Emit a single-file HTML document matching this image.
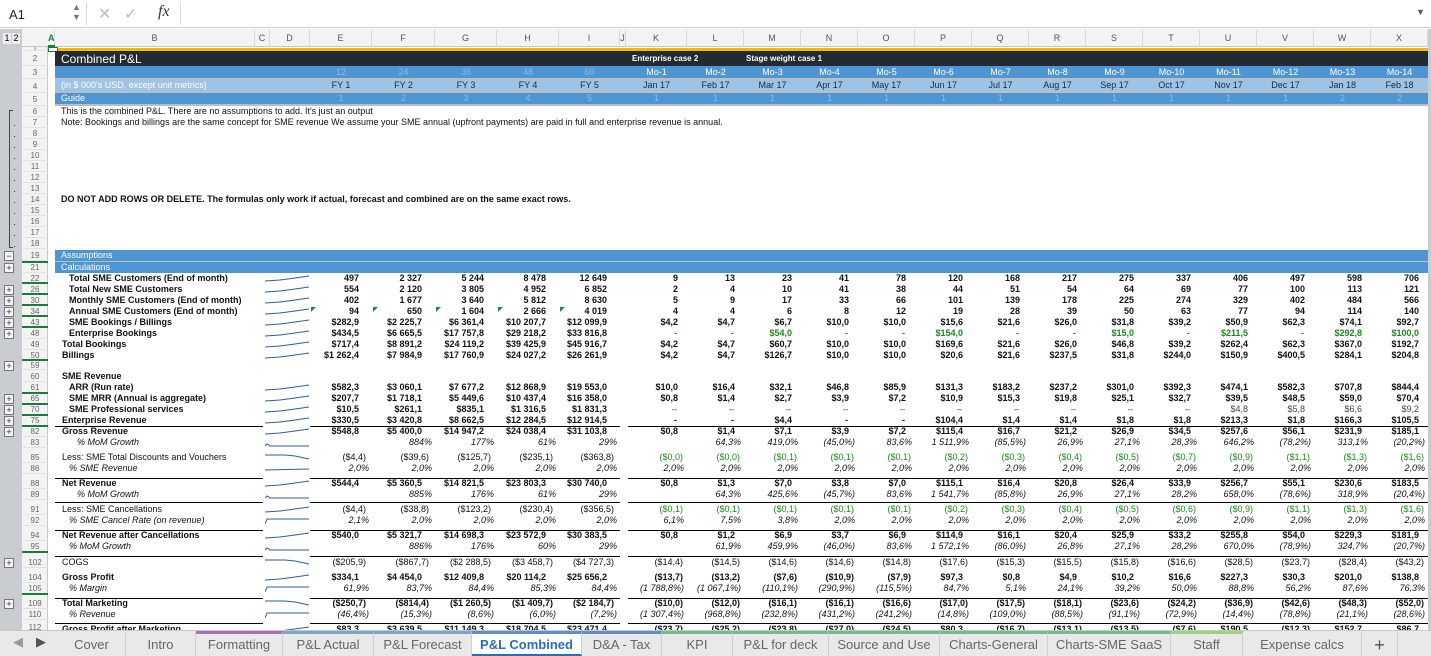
<!DOCTYPE html>
<html><head><meta charset="utf-8">
<style>
*{margin:0;padding:0;box-sizing:border-box}
body{width:1431px;height:656px;overflow:hidden;background:#fff;font-family:"Liberation Sans",sans-serif;position:relative}
.a{position:absolute;white-space:nowrap}
.c{font-size:9px;line-height:11px;color:#111}
.b{font-weight:bold}
.i{font-style:italic}
.g{color:#1a8a1a}
.r{text-align:right}
.tab{position:absolute;top:631px;height:25px;font-size:13px;color:#666;text-align:center;line-height:22px;border-right:1px solid #cfcfcf}
</style></head><body>
<!-- formula bar -->
<div class="a" style="left:0;top:0;width:1431px;height:28px;background:#fff;border-bottom:1px solid #cfcfcf"></div>
<div class="a" style="left:9px;top:7px;font-size:13px;color:#222">A1</div>
<div class="a" style="left:72px;top:2px;font-size:9px;color:#777;line-height:10px">▲<br>▼</div>
<div class="a" style="left:86px;top:3px;width:1px;height:22px;background:#d8d8d8"></div>
<div class="a" style="left:98px;top:4px;font-size:16px;color:#bbb">✕</div>
<div class="a" style="left:124px;top:4px;font-size:16px;color:#bbb">✓</div>
<div class="a" style="left:158px;top:3px;font-size:16px;font-style:italic;font-family:'Liberation Serif',serif;color:#333">fx</div>
<div class="a" style="left:180px;top:3px;width:1px;height:22px;background:#d8d8d8"></div>
<div class="a" style="left:1416px;top:7px;font-size:9px;color:#555">▼</div>
<!-- gutter -->
<div class="a" style="left:0;top:29px;width:22px;height:602px;background:#c9ccd1"></div>
<div class="a" style="left:3px;top:33px;width:8px;height:11px;background:#eee;font-size:9px;line-height:11px;text-align:center">1</div>
<div class="a" style="left:12px;top:33px;width:8px;height:11px;background:#eee;font-size:9px;line-height:11px;text-align:center">2</div>
<div class="a" style="left:22px;top:29px;width:1409px;height:18px;background:#f3f3f3;border-bottom:1px solid #c8c8c8"></div>
<div class="a" style="left:22px;top:47px;width:26px;height:584px;background:#f3f3f3;border-right:1px solid #c8c8c8"></div>
<div class="a" style="left:1428px;top:29px;width:3px;height:602px;background:#c9ccd1"></div>
<div id="root"></div>
<script>
var R=document.getElementById('root');var H='';
function d(s){H+=s}
function box(x,y,w,h,bg,extra){d('<div class="a" style="left:'+x+'px;top:'+y+'px;width:'+w+'px;height:'+h+'px;background:'+bg+';'+(extra||'')+'"></div>')}
function txt(x,y,t,cls,st){d('<div class="a c '+(cls||'')+'" style="left:'+x+'px;top:'+y+'px;'+(st||'')+'">'+t+'</div>')}
function rtxt(xr,y,t,cls,st){d('<div class="a c r '+(cls||'')+'" style="right:'+(1431-xr)+'px;top:'+y+'px;'+(st||'')+'">'+t+'</div>')}
// column headers
var cols=[['A',48,55],['B',55,255],['C',255,270],['D',270,310],['E',310,372],['F',372,435],['G',435,497],['H',497,559],['I',559,620],['J',620,626],['K',626,687],['L',687,744],['M',744,801],['N',801,858],['O',858,915],['P',915,972],['Q',972,1029],['R',1029,1086],['S',1086,1143],['T',1143,1200],['U',1200,1257],['V',1257,1314],['W',1314,1371],['X',1371,1428]];
cols.forEach(function(c){var w=c[2]-c[1];d('<div class="a" style="left:'+c[1]+'px;top:30px;width:'+w+'px;height:17px;border-right:1px solid #d8d8d8;font-size:9px;line-height:17px;text-align:center;color:'+(c[0]=='A'?'#1e7a3c;font-weight:bold':'#555')+'">'+c[0]+'</div>')});
box(48,45,7,2,'#1e7a3c');
// row1 yellow
box(48,48,1380,3,'#f5b800');
box(48,47,10,5,'#fff','border:1px solid #1e7a3c');
// header rows
box(55,51,1373,15,'#222a33');
txt(61,53,'Combined P&amp;L','',"font-size:12px;color:#fff;line-height:12px");
txt(632,54,'Enterprise case 2','b','color:#fff;font-size:8px;line-height:10px');
txt(746,54,'Stage weight case 1','b','color:#fff;font-size:8px;line-height:10px');
box(55,66,1373,12,'#4e95d4');box(55,78,1373,2,'#bdbdbd');
box(55,80,1373,11,'#9cc4e8');box(55,91,1373,2,'#bdbdbd');
box(55,93,1373,11,'#4e95d4');box(55,104,1373,2,'#bdbdbd');
txt(61,80,"(in $ 000's USD, except unit metrics)",'','color:#fff');
txt(61,93,'Guide','','color:#fff');
var fy=['E','F','G','H','I'],mo=['K','L','M','N','O','P','Q','R','S','T','U','V','W','X'];
function cx(n){for(var k=0;k<cols.length;k++)if(cols[k][0]==n)return cols[k];}
fy.forEach(function(n,j){var c=cx(n);var m=(c[1]+c[2])/2;
d('<div class="a c" style="left:'+(m-20)+'px;width:40px;text-align:center;top:67px;color:#8fbbe6">'+(12*(j+1))+'</div>');
d('<div class="a c" style="left:'+(m-20)+'px;width:40px;text-align:center;top:80px;color:#1a2a3a">FY '+(j+1)+'</div>');
d('<div class="a c" style="left:'+(m-20)+'px;width:40px;text-align:center;top:93px;color:#8fbbe6">'+(j+1)+'</div>');});
var mn=['Jan 17','Feb 17','Mar 17','Apr 17','May 17','Jun 17','Jul 17','Aug 17','Sep 17','Oct 17','Nov 17','Dec 17','Jan 18','Feb 18'];
mo.forEach(function(n,j){var c=cx(n);var m=(c[1]+c[2])/2;
d('<div class="a c" style="left:'+(m-25)+'px;width:50px;text-align:center;top:67px;color:#fff">Mo-'+(j+1)+'</div>');
d('<div class="a c" style="left:'+(m-25)+'px;width:50px;text-align:center;top:80px;color:#1a2a3a">'+mn[j]+'</div>');
d('<div class="a c" style="left:'+(m-25)+'px;width:50px;text-align:center;top:93px;color:#8fbbe6">'+(j<12?1:2)+'</div>');});
// row numbers
var rn=[[1,47,4],[2,51,15],[3,66,13],[4,80,13],[5,93,13]];
var y=106;for(var k=6;k<=18;k++){rn.push([k,y,11]);y+=11}
rn.push(['',249,1]);
var seq=[[19,250,11],[21,262,11],[22,273,11],[26,284,11],[30,295,11],[34,306,11],[43,317,11],[48,328,11],[49,339,11],[50,350,11],[59,361,9],[60,371,11],[61,382,11],[65,393,11],[70,404,11],[75,415,11],[82,426,11],[83,437,11],['',448,4],[85,452,11],[86,463,11],['',474,4],[88,478,11],[89,489,11],['',500,4],[91,504,11],[92,515,11],['',526,4],[94,530,11],[95,541,11],['',552,5],[102,557,11],['',568,4],[104,572,11],[105,583,11],['',594,4],[109,598,11],[110,609,11],['',620,4],[112,624,8]];
rn=rn.concat(seq);
rn.forEach(function(r){if(r[0]!=='')d('<div class="a" style="left:22px;top:'+r[1]+'px;width:26px;height:'+r[2]+'px;font-size:8px;line-height:'+r[2]+'px;text-align:center;color:#666;border-bottom:1px solid #e2e2e2;overflow:hidden">'+r[0]+'</div>')});
// green outline markers under row numbers
[262,283,294,305,316,327,360,393,404,415,426,552,594].forEach(function(g){box(22,g-1,26,2,'#1e7a3c')});
// outline + buttons
[[19,'−'],[21,'+'],[26,'+'],[30,'+'],[34,'+'],[43,'+'],[48,'+'],[59,'+'],[65,'+'],[70,'+'],[75,'+'],[82,'+'],[102,'+'],[109,'+']].forEach(function(p){var r=seq.filter(function(q){return q[0]==p[0]})[0];var yy=r[1]+r[2]/2-5;d('<div class="a" style="left:4px;top:'+yy+'px;width:10px;height:10px;border:1px solid #777;background:#f4f4f4;font-size:9px;line-height:8px;text-align:center;color:#333">'+p[1]+'</div>')});
box(9,110,1,138,'#444');box(9,110,4,1,'#444');box(9,247,4,1,'#444');
for(var k=0;k<12;k++)box(14,125+k*11,1,1,'#333');
// text rows 6,7,14
txt(61,106,'This is the combined P&amp;L. There are no assumptions to add. It\'s just an output');
txt(61,117,'Note: Bookings and billings are the same concept for SME revenue We assume your SME annual (upfront payments) are paid in full and enterprise revenue is annual.');
txt(61,194,'DO NOT ADD ROWS OR DELETE. The formulas only work if actual, forecast and combined are on the same exact rows.','b');
// assumptions/calculations bars
box(55,250,1373,11,'#4e95d4');box(55,261,1373,1,'#bdbdbd');box(55,262,1373,11,'#4e95d4');
txt(61,250,'Assumptions','','color:#fff');txt(61,262,'Calculations','','color:#fff');
// data
function sp(a){return a.split('|')}
var rows=[
[273,'Total SME Customers (End of month)',69,'b','497|2 327|5 244|8 478|12 649','9|13|23|41|78|120|168|217|275|337|406|497|598|706'],
[284,'Total New SME Customers',69,'b','554|2 120|3 805|4 952|6 852','2|4|10|41|38|44|51|54|64|69|77|100|113|121'],
[295,'Monthly SME Customers (End of month)',69,'b','402|1 677|3 640|5 812|8 630','5|9|17|33|66|101|139|178|225|274|329|402|484|566'],
[306,'Annual SME Customers (End of month)',69,'b','94|650|1 604|2 666|4 019','4|4|6|8|12|19|28|39|50|63|77|94|114|140'],
[317,'SME Bookings / Billings',69,'b','$282,9|$2 225,7|$6 361,4|$10 207,7|$12 099,9','$4,2|$4,7|$6,7|$10,0|$10,0|$15,6|$21,6|$26,0|$31,8|$39,2|$50,9|$62,3|$74,1|$92,7'],
[328,'Enterprise Bookings',69,'b','$434,5|$6 665,5|$17 757,8|$29 218,2|$33 816,8','g-|g-|g$54,0|g-|g-|g$154,0|g-|g-|g$15,0|g-|g$211,5|g-|g$292,8|g$100,0'],
[339,'Total Bookings',62,'b','$717,4|$8 891,2|$24 119,2|$39 425,9|$45 916,7','$4,2|$4,7|$60,7|$10,0|$10,0|$169,6|$21,6|$26,0|$46,8|$39,2|$262,4|$62,3|$367,0|$192,7'],
[350,'Billings',62,'b','$1 262,4|$7 984,9|$17 760,9|$24 027,2|$26 261,9','$4,2|$4,7|$126,7|$10,0|$10,0|$20,6|$21,6|$237,5|$31,8|$244,0|$150,9|$400,5|$284,1|$204,8'],
[371,'SME Revenue',62,'b','',''],
[382,'ARR (Run rate)',69,'b','$582,3|$3 060,1|$7 677,2|$12 868,9|$19 553,0','$10,0|$16,4|$32,1|$46,8|$85,9|$131,3|$183,2|$237,2|$301,0|$392,3|$474,1|$582,3|$707,8|$844,4'],
[393,'SME MRR (Annual is aggregate)',69,'b','$207,7|$1 718,1|$5 449,6|$10 437,4|$16 358,0','$0,8|$1,4|$2,7|$3,9|$7,2|$10,9|$15,3|$19,8|$25,1|$32,7|$39,5|$48,5|$59,0|$70,4'],
[404,'SME Professional services',69,'b','$10,5|$261,1|$835,1|$1 316,5|$1 831,3','n–|n–|n–|n–|n–|n–|n–|n–|n–|n–|n$4,8|n$5,8|n$6,6|n$9,2'],
[415,'Enterprise Revenue',62,'b','$330,5|$3 420,8|$8 662,5|$12 284,5|$12 914,5','-|-|$4,4|-|-|$104,4|$1,4|$1,4|$1,8|$1,8|$213,3|$1,8|$166,3|$105,5'],
[426,'Gross Revenue',62,'b','$548,8|$5 400,0|$14 947,2|$24 038,4|$31 103,8','$0,8|$1,4|$7,1|$3,9|$7,2|$115,4|$16,7|$21,2|$26,9|$34,5|$257,6|$56,1|$231,9|$185,1'],
[437,'% MoM Growth',77,'i','|884%|177%|61%|29%','|64,3%|419,0%|(45,0%)|83,6%|1 511,9%|(85,5%)|26,9%|27,1%|28,3%|646,2%|(78,2%)|313,1%|(20,2%)'],
[452,'Less: SME Total Discounts and Vouchers',62,'','($4,4)|($39,6)|($125,7)|($235,1)|($363,8)','g($0,0)|g($0,0)|g($0,1)|g($0,1)|g($0,1)|g($0,2)|g($0,3)|g($0,4)|g($0,5)|g($0,7)|g($0,9)|g($1,1)|g($1,3)|g($1,6)'],
[463,'% SME Revenue',69,'i','2,0%|2,0%|2,0%|2,0%|2,0%','2,0%|2,0%|2,0%|2,0%|2,0%|2,0%|2,0%|2,0%|2,0%|2,0%|2,0%|2,0%|2,0%|2,0%'],
[478,'Net Revenue',62,'b','$544,4|$5 360,5|$14 821,5|$23 803,3|$30 740,0','$0,8|$1,3|$7,0|$3,8|$7,0|$115,1|$16,4|$20,8|$26,4|$33,9|$256,7|$55,1|$230,6|$183,5'],
[489,'% MoM Growth',77,'i','|885%|176%|61%|29%','|64,3%|425,6%|(45,7%)|83,6%|1 541,7%|(85,8%)|26,9%|27,1%|28,2%|658,0%|(78,6%)|318,9%|(20,4%)'],
[504,'Less: SME Cancellations',62,'','($4,4)|($38,8)|($123,2)|($230,4)|($356,5)','g($0,1)|g($0,1)|g($0,1)|g($0,1)|g($0,1)|g($0,2)|g($0,3)|g($0,4)|g($0,5)|g($0,6)|g($0,9)|g($1,1)|g($1,3)|g($1,6)'],
[515,'% SME Cancel Rate (on revenue)',69,'i','2,1%|2,0%|2,0%|2,0%|2,0%','6,1%|7,5%|3,8%|2,0%|2,0%|2,0%|2,0%|2,0%|2,0%|2,0%|2,0%|2,0%|2,0%|2,0%'],
[530,'Net Revenue after Cancellations',62,'b','$540,0|$5 321,7|$14 698,3|$23 572,9|$30 383,5','$0,8|$1,2|$6,9|$3,7|$6,9|$114,9|$16,1|$20,4|$25,9|$33,2|$255,8|$54,0|$229,3|$181,9'],
[541,'% MoM Growth',69,'i','|886%|176%|60%|29%','|61,9%|459,9%|(46,0%)|83,6%|1 572,1%|(86,0%)|26,8%|27,1%|28,2%|670,0%|(78,9%)|324,7%|(20,7%)'],
[557,'COGS',62,'','($205,9)|($867,7)|($2 288,5)|($3 458,7)|($4 727,3)','($14,4)|($14,5)|($14,6)|($14,6)|($14,8)|($17,6)|($15,3)|($15,5)|($15,8)|($16,6)|($28,5)|($23,7)|($28,4)|($43,2)'],
[572,'Gross Profit',62,'b','$334,1|$4 454,0|$12 409,8|$20 114,2|$25 656,2','($13,7)|($13,2)|($7,6)|($10,9)|($7,9)|$97,3|$0,8|$4,9|$10,2|$16,6|$227,3|$30,3|$201,0|$138,8'],
[583,'% Margin',69,'i','61,9%|83,7%|84,4%|85,3%|84,4%','(1 788,8%)|(1 067,1%)|(110,1%)|(290,9%)|(115,5%)|84,7%|5,1%|24,1%|39,2%|50,0%|88,8%|56,2%|87,6%|76,3%'],
[598,'Total Marketing',62,'b','($250,7)|($814,4)|($1 260,5)|($1 409,7)|($2 184,7)','($10,0)|($12,0)|($16,1)|($16,1)|($16,6)|($17,0)|($17,5)|($18,1)|($23,6)|($24,2)|($36,9)|($42,6)|($48,3)|($52,0)'],
[609,'% Revenue',69,'i','(46,4%)|(15,3%)|(8,6%)|(6,0%)|(7,2%)','(1 307,4%)|(968,8%)|(232,8%)|(431,2%)|(241,2%)|(14,8%)|(109,0%)|(88,5%)|(91,1%)|(72,9%)|(14,4%)|(78,8%)|(21,1%)|(28,6%)'],
[624,'Gross Profit after Marketing',62,'b','$83,3|$3 639,5|$11 149,3|$18 704,5|$23 471,4','($23,7)|($25,2)|($23,8)|($27,0)|($24,5)|$80,3|($16,7)|($13,1)|($13,5)|($7,6)|$190,5|($12,3)|$152,7|$86,7']
];
function put(c,y,v,cls,isFy){if(v==='')return;var c2=cls,col='';
if(v[0]=='g'){v=v.slice(1);col='color:#1a8a1a;'}
var nb=false;if(v[0]=='n'){v=v.slice(1);nb=true;col='color:#444;'}
var pct=v.indexOf('%')>=0;var neg=v[0]=='(';var dash=(v=='-'||v=='–');
var pad=pct?3:(neg?(isFy?6:4):(isFy?13:(dash?10:9)));
if(pct){c2='i'}else if(nb){c2=''}
if(dash){rtxt(c[2]-pad,y,v,c2,col);return}
rtxt(c[2]-pad,y,v,c2,col);}
rows.forEach(function(r){var y=r[0];txt(r[2],y,r[1],r[3]);
var bold=r[3]=='b'?'b':'';
var f=r[4]?sp(r[4]):[],m=r[5]?sp(r[5]):[];
f.forEach(function(v,j){put(cx(fy[j]),y,v,bold,true)});
m.forEach(function(v,j){put(cx(mo[j]),y,v,bold,false)});
if(y!=371){var yy=y+5;var tr=(y==437||y==489||y==541)?'M0 9 L2 7 L4 8 L5 9 L44 9':(y==583||y==515||y==609)?'M0 9 L2 4 L44 4':(y>=452&&y<=470||y==557||y==598)?'M0 3 L20 3 L30 4 L44 7':'M0 8 L15 7 L30 5 L44 3';
if(y==463)tr='M0 7 L44 6';
d('<svg class="a" style="left:265px;top:'+(y)+'px" width="46" height="11"><path d="'+tr+'" stroke="#2f5d9a" stroke-width="1" fill="none"/></svg>');}
});
// green triangles row 34
[310,372,435,497,559].forEach(function(x){d('<svg class="a" style="left:'+(x+1)+'px;top:307px" width="5" height="5"><path d="M0 0 L5 0 L0 5Z" fill="#1e8a3c"/></svg>')});
// rules
[426,478,502,530,556,598,623].forEach(function(yy){box(55,yy,208,1,'#000');box(310,yy,310,1,'#000');box(628,yy,800,1,'#000')});
// tabs
box(0,630,1431,26,'#e9e9e9','border-top:1px solid #c8c8c8');
d('<div class="a" style="left:13px;top:634px;font-size:13px;color:#999">◀</div><div class="a" style="left:36px;top:634px;font-size:13px;color:#555">▶</div>');
var tabs=[['Cover',58,126,''],['Intro',126,196,''],['Formatting',196,283,'#a86cc1'],['P&amp;L Actual',283,374,'#7fa3cc'],['P&amp;L Forecast',374,472,'#7fa3cc'],['P&amp;L Combined',472,582,'#5b8fcf'],['D&amp;A - Tax',582,662,'#5b8fcf'],['KPI',662,733,'#6cc08b'],['P&amp;L for deck',733,829,'#6cc08b'],['Source and Use',829,940,'#6cc08b'],['Charts-General',940,1048,'#6cc08b'],['Charts-SME SaaS',1048,1171,'#6cc08b'],['Staff',1171,1243,'#9fd07a'],['Expense calcs',1243,1362,''],['+',1362,1398,'']];
tabs.forEach(function(t){var act=t[0]=='P&amp;L Combined';
d('<div class="tab" style="left:'+t[1]+'px;width:'+(t[2]-t[1])+'px;'+(t[3]?'border-top:3px solid '+t[3]+';':'border-top:3px solid transparent;')+(act?'background:#fff;color:#2a6ebb;font-weight:bold;border-bottom:2px solid #2a6ebb;':'')+(t[0]=='+'?'font-size:18px;color:#555;':'')+'">'+t[0]+'</div>')});
R.innerHTML=H;
</script>
</body></html>
